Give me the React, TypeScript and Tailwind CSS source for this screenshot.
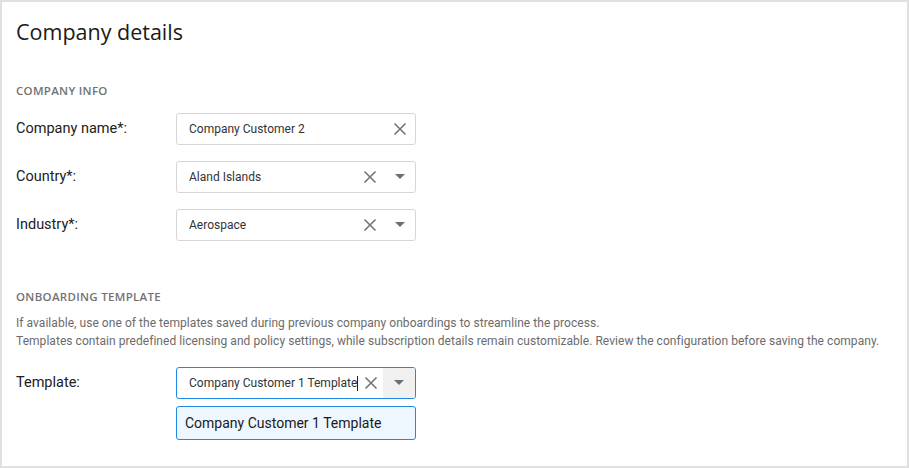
import React from 'react';

const XIcon = () => (
  <svg width="14" height="14" viewBox="0 0 14 14" className="text-[#757575]">
    <path d="M1.5 1.5 L12.5 12.5 M12.5 1.5 L1.5 12.5" stroke="currentColor" strokeWidth="1.6" fill="none" />
  </svg>
);

const Caret = () => (
  <svg width="10" height="6" viewBox="0 0 10 6" className="text-[#6f6f6f]">
    <path d="M0 0 H10 L5 5 Z" fill="currentColor" />
  </svg>
);

const Field: React.FC<{ label: string; value: string; select?: boolean }> = ({ label, value, select }) => (
  <div className="flex items-center h-8">
    <label className="w-[160px] text-[14.5px] text-[#212121]">{label}</label>
    <div className="w-[240px] h-8 flex items-center border border-[#d6d6d6] rounded-[3px] bg-white">
      <span className="flex-1 pl-3 text-[12px] text-[#333] whitespace-nowrap">{value}</span>
      <span className="w-[30px] flex justify-center">
        <XIcon />
      </span>
      {select && (
        <span className="w-[30px] flex justify-center">
          <Caret />
        </span>
      )}
    </div>
  </div>
);

export default function App() {
  return (
    <div
      className="w-[909px] h-[468px] bg-[#e0e0e0] p-[2px]"
      style={{ fontFamily: 'Roboto, "Noto Sans", sans-serif' }}
    >
      <div className="w-full h-full bg-white px-[14px] overflow-hidden">
        <h1 className="pt-[17px] text-[21.5px] leading-[26px] text-[#1a1a1a]" style={{ fontFamily: '"Open Sans", sans-serif' }}>
          Company details
        </h1>

        {/* Company info */}
        <h2 className="mt-[38px] text-[11.5px] leading-[16px] font-semibold tracking-[0.3px] text-[#727272]" style={{ fontFamily: '"Open Sans", sans-serif' }}>
          COMPANY INFO
        </h2>

        <div className="mt-[14px] flex flex-col gap-4">
          <Field label="Company name*:" value="Company Customer 2" />
          <Field label="Country*:" value="Aland Islands" select />
          <Field label="Industry*:" value="Aerospace" select />
        </div>

        {/* Onboarding template */}
        <h2 className="mt-[48px] text-[11.5px] leading-[16px] font-semibold tracking-[0.3px] text-[#727272]" style={{ fontFamily: '"Open Sans", sans-serif' }}>
          ONBOARDING TEMPLATE
        </h2>
        <p className="mt-[9px] text-[12px] leading-[18px] tracking-[0.05px] text-[#6b6b6b] whitespace-nowrap">
          If available, use one of the templates saved during previous company onboardings to streamline the process.
          <br />
          Templates contain predefined licensing and policy settings, while subscription details remain customizable. Review the configuration before saving the company.
        </p>

        <div className="mt-[17px] flex items-center h-8">
          <label className="w-[160px] text-[14.5px] text-[#212121]">Template:</label>
          <div className="w-[240px] h-8 flex items-center border border-[#1e88e5] rounded-[3px] bg-white overflow-hidden">
            <span className="flex-1 pl-3 text-[12px] text-[#333] flex items-center whitespace-nowrap">
              Company Customer 1 Template
              <span className="inline-block w-px h-[15px] bg-[#222]" />
            </span>
            <span className="w-[24px] flex justify-center">
              <XIcon />
            </span>
            <span className="w-[32px] h-full flex items-center justify-center bg-[#f0f0f0]">
              <Caret />
            </span>
          </div>
        </div>
        <div className="ml-[160px] mt-[7px] w-[240px] h-[34px] flex items-center border border-[#1e88e5] rounded-[3px] bg-[#eef6ff] px-2 text-[14px] text-[#1a1a1a] whitespace-nowrap">
          Company Customer 1 Template
        </div>
      </div>
    </div>
  );
}
